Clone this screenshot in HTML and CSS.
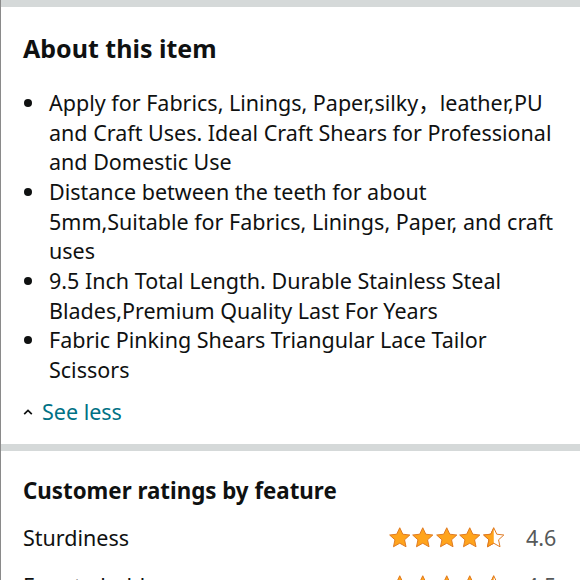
FILE: index.html
```html
<!DOCTYPE html>
<html>
<head>
<meta charset="utf-8">
<link rel="stylesheet" href="styles.css">
</head>
<body>
<div class="page">
  <div class="band"></div>
  <section class="about">
    <h2 class="title">About this item</h2>
    <ul class="bullets">
      <li>Apply for Fabrics, Linings, Paper,silky，leather,PU and Craft Uses. Ideal Craft Shears for Professional and Domestic Use</li>
      <li>Distance between the teeth for about 5mm,Suitable for Fabrics, Linings, Paper, and craft uses</li>
      <li>9.5 Inch Total Length. Durable Stainless Steal Blades,Premium Quality Last For Years</li>
      <li>Fabric Pinking Shears Triangular Lace Tailor Scissors</li>
    </ul>
    <a class="toggle" href="#"><span class="chev"><svg width="10" height="8" viewBox="0 0 10 8"><path d="M1.2 6.2 L5 2.4 L8.8 6.2" fill="none" stroke="#0f1111" stroke-width="1.7"/></svg></span>See less</a>
  </section>
  <div class="band"></div>
  <section class="ratings">
    <h2 class="title small">Customer ratings by feature</h2>
    <div class="row">
      <span class="label">Sturdiness</span>
      <span class="stars">
        <svg class="star" viewBox="0 0 24 24"><path d="M12 1.8l3.1 6.6 7.2.8-5.4 4.9 1.5 7.1L12 17.6l-6.4 3.6 1.5-7.1-5.4-4.9 7.2-.8z" fill="#ffa41c" stroke="#de7921" stroke-width="1"/></svg>
        <svg class="star" viewBox="0 0 24 24"><path d="M12 1.8l3.1 6.6 7.2.8-5.4 4.9 1.5 7.1L12 17.6l-6.4 3.6 1.5-7.1-5.4-4.9 7.2-.8z" fill="#ffa41c" stroke="#de7921" stroke-width="1"/></svg>
        <svg class="star" viewBox="0 0 24 24"><path d="M12 1.8l3.1 6.6 7.2.8-5.4 4.9 1.5 7.1L12 17.6l-6.4 3.6 1.5-7.1-5.4-4.9 7.2-.8z" fill="#ffa41c" stroke="#de7921" stroke-width="1"/></svg>
        <svg class="star" viewBox="0 0 24 24"><path d="M12 1.8l3.1 6.6 7.2.8-5.4 4.9 1.5 7.1L12 17.6l-6.4 3.6 1.5-7.1-5.4-4.9 7.2-.8z" fill="#ffa41c" stroke="#de7921" stroke-width="1"/></svg>
        <svg class="star" viewBox="0 0 24 24"><defs><clipPath id="h1"><rect x="0" y="0" width="12" height="24"/></clipPath></defs><path d="M12 1.8l3.1 6.6 7.2.8-5.4 4.9 1.5 7.1L12 17.6l-6.4 3.6 1.5-7.1-5.4-4.9 7.2-.8z" fill="#fff" stroke="#de7921" stroke-width="1"/><path clip-path="url(#h1)" d="M12 1.8l3.1 6.6 7.2.8-5.4 4.9 1.5 7.1L12 17.6l-6.4 3.6 1.5-7.1-5.4-4.9 7.2-.8z" fill="#ffa41c" stroke="#de7921" stroke-width="1"/></svg>
      </span>
      <span class="score">4.6</span>
    </div>
    <div class="row">
      <span class="label">Easy to hold</span>
      <span class="stars">
        <svg class="star" viewBox="0 0 24 24"><path d="M12 1.8l3.1 6.6 7.2.8-5.4 4.9 1.5 7.1L12 17.6l-6.4 3.6 1.5-7.1-5.4-4.9 7.2-.8z" fill="#ffa41c" stroke="#de7921" stroke-width="1"/></svg>
        <svg class="star" viewBox="0 0 24 24"><path d="M12 1.8l3.1 6.6 7.2.8-5.4 4.9 1.5 7.1L12 17.6l-6.4 3.6 1.5-7.1-5.4-4.9 7.2-.8z" fill="#ffa41c" stroke="#de7921" stroke-width="1"/></svg>
        <svg class="star" viewBox="0 0 24 24"><path d="M12 1.8l3.1 6.6 7.2.8-5.4 4.9 1.5 7.1L12 17.6l-6.4 3.6 1.5-7.1-5.4-4.9 7.2-.8z" fill="#ffa41c" stroke="#de7921" stroke-width="1"/></svg>
        <svg class="star" viewBox="0 0 24 24"><path d="M12 1.8l3.1 6.6 7.2.8-5.4 4.9 1.5 7.1L12 17.6l-6.4 3.6 1.5-7.1-5.4-4.9 7.2-.8z" fill="#ffa41c" stroke="#de7921" stroke-width="1"/></svg>
        <svg class="star" viewBox="0 0 24 24"><defs><clipPath id="h2"><rect x="0" y="0" width="12" height="24"/></clipPath></defs><path d="M12 1.8l3.1 6.6 7.2.8-5.4 4.9 1.5 7.1L12 17.6l-6.4 3.6 1.5-7.1-5.4-4.9 7.2-.8z" fill="#fff" stroke="#de7921" stroke-width="1"/><path clip-path="url(#h2)" d="M12 1.8l3.1 6.6 7.2.8-5.4 4.9 1.5 7.1L12 17.6l-6.4 3.6 1.5-7.1-5.4-4.9 7.2-.8z" fill="#ffa41c" stroke="#de7921" stroke-width="1"/></svg>
      </span>
      <span class="score">4.5</span>
    </div>
  </section>
</div>
</body>
</html>
```

FILE: styles.css
```css
html, body {
  margin: 0;
  padding: 0;
  background: #fff;
}
body {
  font-family: "Noto Sans", "Noto Sans CJK SC", sans-serif;
  color: #0f1111;
}
.page {
  border-left: 1px solid #8a8a8a;
  min-height: 580px;
  overflow: hidden;
}
.band {
  height: 7px;
  background: #d5d9d9;
}
.about {
  padding: 23px 0 17px 22px;
}
.title {
  margin: 0;
  font-size: 25px;
  font-weight: 700;
  line-height: 36px;
}
.title.small {
  font-size: 22.3px;
}
.bullets {
  list-style: none;
  margin: 22px 0 0 0;
  padding: 0;
  width: 535px;
  font-size: 21.5px;
  line-height: 29.67px;
}
.bullets li {
  display: flex;
  gap: 17px;
  margin: 0;
}
.bullets li::before {
  content: "";
  flex: 0 0 8px;
  width: 8px;
  height: 8px;
  margin-top: 11px;
  margin-left: 1px;
  border-radius: 50%;
  background: #0f1111;
}
.toggle {
  display: flex;
  align-items: center;
  margin-top: 12px;
  color: #007185;
  font-size: 21.5px;
  line-height: 30px;
  text-decoration: none;
}
.chev {
  display: inline-flex;
  width: 19px;
}
.ratings {
  padding: 22px 22px 0 22px;
}
.row {
  display: flex;
  align-items: center;
  margin-top: 13px;
  height: 32px;
  font-size: 21.5px;
}
.row + .row {
  margin-top: 16px;
}
.label {
  flex: 1;
}
.stars {
  display: flex;
  margin-right: 21px;
}
.star {
  width: 23.5px;
  height: 23.5px;
}
.score {
  color: #565959;
  width: 32px;
}
```
